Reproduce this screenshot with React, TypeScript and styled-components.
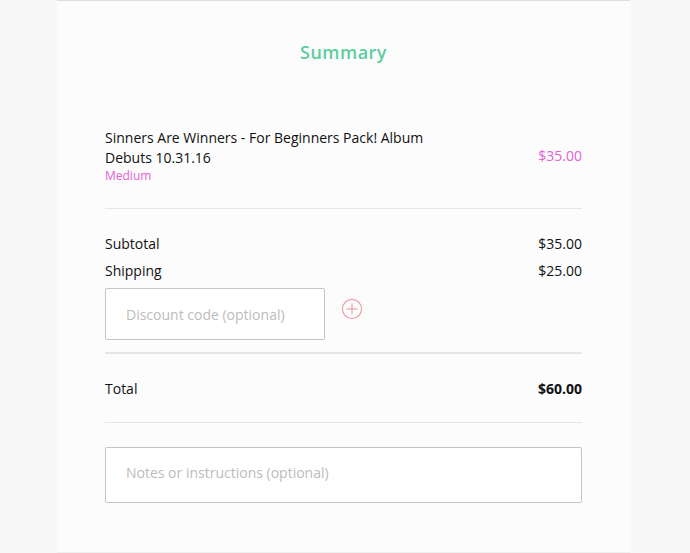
import React from "react";
import styled, { createGlobalStyle } from "styled-components";

const Global = createGlobalStyle`
  html, body { margin: 0; padding: 0; background: #f7f7f7; }
  body { font-family: "Open Sans", "Liberation Sans", sans-serif; color: #111; }
  * { box-sizing: border-box; }
`;

const Page = styled.div`
  display: flex;
  justify-content: flex-start;
  padding-left: 57px;
  height: 553px;
  overflow: hidden;
`;

const Panel = styled.section`
  width: 573px;
  height: 553px;
  background: #fcfcfc;
  border-top: 1px solid #dedede;
  border-bottom: 1px solid #efefef;
  padding: 0 48px;
  display: flex;
  flex-direction: column;
`;

const Title = styled.h2`
  margin: 0;
  padding-top: 38px;
  height: 118px;
  text-align: center;
  font-size: 18px;
  font-weight: 600;
  line-height: 26px;
  color: #5dcd9f;
  letter-spacing: 0.5px;
`;

const ItemRow = styled.div`
  display: flex;
  justify-content: space-between;
  align-items: center;
  padding: 9px 0 24px;
  border-bottom: 1px solid #e5e5e5;
`;

const ItemInfo = styled.div`
  display: flex;
  flex-direction: column;
  width: 340px;
`;

const ItemName = styled.div`
  font-size: 14px;
  line-height: 20px;
  color: #111;
`;

const Variant = styled.div`
  font-size: 12px;
  line-height: 16px;
  color: #e45fd3;
`;

const Price = styled.div<{ $accent?: boolean; $bold?: boolean }>`
  font-size: 14px;
  line-height: 20px;
  color: ${(p) => (p.$accent ? "#e45fd3" : "#111")};
  font-weight: ${(p) => (p.$bold ? 700 : 400)};
`;

const Totals = styled.div`
  display: flex;
  flex-direction: column;
  padding-top: 25px;
  gap: 7px;
`;

const Line = styled.div`
  display: flex;
  justify-content: space-between;
  font-size: 14px;
  line-height: 20px;
`;

const DiscountRow = styled.div`
  display: flex;
  align-items: center;
  gap: 16px;
  padding-bottom: 12px;
  border-bottom: 2px solid #e5e5e5;
`;

const Field = styled.input`
  width: 220px;
  height: 52px;
  border: 1px solid #c4c4c4;
  border-radius: 2px;
  background: #fff;
  padding: 0 20px;
  font-family: "Open Sans", "Liberation Sans", sans-serif;
  font-size: 14px;
  color: #111;
  outline: none;
  &::placeholder { color: #bcbcbc; }
`;

const AddButton = styled.button`
  width: 22px;
  height: 22px;
  padding: 0;
  border: none;
  background: transparent;
  display: flex;
  align-items: center;
  justify-content: center;
  margin-top: -10px;
`;

const TotalRow = styled(Line)`
  padding: 25px 0 23px;
  border-bottom: 1px solid #e5e5e5;
`;

const Notes = styled.textarea`
  margin-top: 24px;
  width: 100%;
  height: 56px;
  border: 1px solid #c4c4c4;
  border-radius: 2px;
  background: #fff;
  padding: 15px 20px 0;
  font-family: "Open Sans", "Liberation Sans", sans-serif;
  font-size: 14px;
  line-height: 20px;
  resize: none;
  outline: none;
  &::placeholder { color: #bcbcbc; }
`;

export default function App() {
  return (
    <>
      <Global />
      <Page>
        <Panel>
          <Title>Summary</Title>
          <ItemRow>
            <ItemInfo>
              <ItemName>Sinners Are Winners - For Beginners Pack! Album Debuts 10.31.16</ItemName>
              <Variant>Medium</Variant>
            </ItemInfo>
            <Price $accent>$35.00</Price>
          </ItemRow>
          <Totals>
            <Line>
              <span>Subtotal</span>
              <Price>$35.00</Price>
            </Line>
            <Line>
              <span>Shipping</span>
              <Price>$25.00</Price>
            </Line>
            <DiscountRow>
              <Field placeholder="Discount code (optional)" />
              <AddButton aria-label="Apply discount">
                <svg width="22" height="22" viewBox="0 0 22 22" fill="none" stroke="#eaa3ad" strokeWidth="1.2">
                  <circle cx="11" cy="11" r="9.6" />
                  <line x1="11" y1="5.5" x2="11" y2="16.5" />
                  <line x1="5.5" y1="11" x2="16.5" y2="11" />
                </svg>
              </AddButton>
            </DiscountRow>
          </Totals>
          <TotalRow>
            <span>Total</span>
            <Price $bold>$60.00</Price>
          </TotalRow>
          <Notes placeholder="Notes or instructions (optional)" />
        </Panel>
      </Page>
    </>
  );
}
